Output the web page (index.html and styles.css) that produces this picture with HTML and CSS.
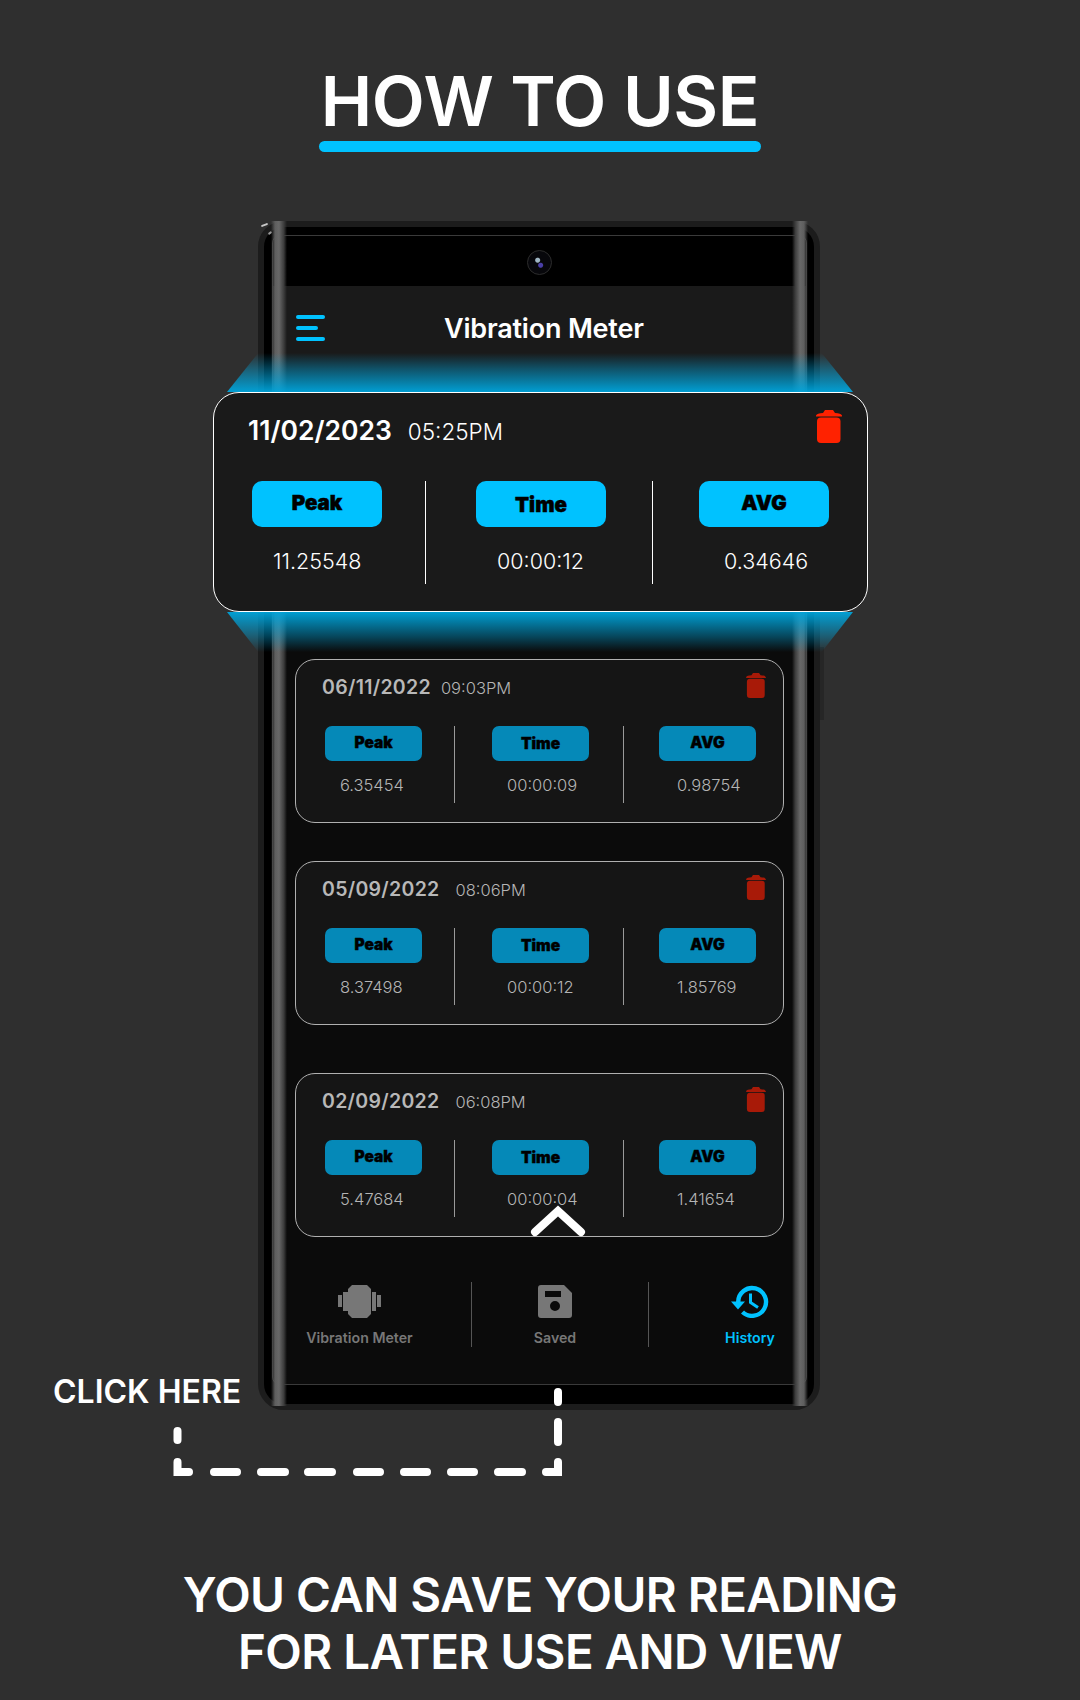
FILE: index.html
```html
<!DOCTYPE html>
<html lang="en">
<head>
    <meta charset="UTF-8">
    <meta name="viewport" content="width=device-width, initial-scale=1.0">
    <title>How to use - Vibration Meter</title>
    <link rel="stylesheet" href="styles.css">
</head>
<body>

    <svg width="0" height="0" class="defs">
        <symbol id="trash" viewBox="0 0 26 33">
            <path d="M0 5.5Q1 3.2 7 3L9 0H17L19 3Q25 3.2 26 5.5V6.5H0Z"/>
            <rect x="1" y="7.5" width="23.5" height="25.5" rx="4"/>
        </symbol>
    </svg>

    <main class="page">
        <header class="heading">
            <h1>HOW TO USE</h1>
        </header>

        <section class="phone">
            <span class="side-btn"></span>
            <span class="glint"></span>
            <span class="glint glint-inner"></span>
            <span class="strip strip-left"></span>
            <span class="strip strip-right"></span>

            <div class="screen">
                <div class="notch"><span class="camera"></span></div>

                <div class="appbar">
                    <span class="burger"><i></i><i class="short"></i><i></i></span>
                    <span class="appbar-title">Vibration Meter</span>
                </div>

                <div class="list">
                    <article class="rec">
                        <div class="rec-head">
                            <div class="when"><b>06/11/2022</b><span>09:03PM</span></div>
                            <svg class="trash"><use href="#trash"/></svg>
                        </div>
                        <div class="stats">
                            <div class="stat"><div class="pill">Peak</div><p>6.35454</p></div>
                            <span class="sep sep-a"></span>
                            <div class="stat"><div class="pill pill-low">Time</div><p>00:00:09</p></div>
                            <span class="sep sep-b"></span>
                            <div class="stat stat-last"><div class="pill">AVG</div><p>0.98754</p></div>
                        </div>
                    </article>

                    <article class="rec rec-wide">
                        <div class="rec-head">
                            <div class="when"><b>05/09/2022</b><span>08:06PM</span></div>
                            <svg class="trash"><use href="#trash"/></svg>
                        </div>
                        <div class="stats">
                            <div class="stat"><div class="pill">Peak</div><p>8.37498</p></div>
                            <span class="sep sep-a"></span>
                            <div class="stat"><div class="pill pill-low">Time</div><p>00:00:12</p></div>
                            <span class="sep sep-b"></span>
                            <div class="stat stat-last"><div class="pill">AVG</div><p>1.85769</p></div>
                        </div>
                    </article>

                    <article class="rec rec-wide rec-last">
                        <div class="rec-head">
                            <div class="when"><b>02/09/2022</b><span>06:08PM</span></div>
                            <svg class="trash"><use href="#trash"/></svg>
                        </div>
                        <div class="stats">
                            <div class="stat"><div class="pill">Peak</div><p>5.47684</p></div>
                            <span class="sep sep-a"></span>
                            <div class="stat"><div class="pill pill-low">Time</div><p>00:00:04</p></div>
                            <span class="sep sep-b"></span>
                            <div class="stat stat-last"><div class="pill">AVG</div><p>1.41654</p></div>
                        </div>
                    </article>
                </div>

                <nav class="tabs">
                    <div class="tab tab-vib">
                        <svg width="43" height="33" viewBox="0 0 43 33" fill="#777">
                            <path d="M14 0H29L33 4V29L29 33H14L10 29V4Z"/>
                            <rect x="5" y="7" width="5" height="19"/>
                            <rect x="34" y="7" width="4" height="19"/>
                            <rect y="10" width="4" height="12"/>
                            <rect x="39" y="10" width="4" height="12"/>
                        </svg>
                        <span>Vibration Meter</span>
                    </div>
                    <span class="tab-sep"></span>
                    <div class="tab tab-saved">
                        <svg width="34" height="33" viewBox="0 0 34 33" fill="#777">
                            <path fill-rule="evenodd" d="M3 0H26L34 8V30A3 3 0 0 1 31 33H3A3 3 0 0 1 0 30V3A3 3 0 0 1 3 0ZM7 6V12H23V6ZM17 16A5 5 0 1 0 17 26A5 5 0 1 0 17 16Z"/>
                        </svg>
                        <span>Saved</span>
                    </div>
                    <span class="tab-sep"></span>
                    <div class="tab tab-history">
                        <svg width="38" height="33" viewBox="0 0 38 33">
                            <path d="M7.2 17A13.9 13.9 0 1 1 11.5 27" fill="none" stroke="#00c2ff" stroke-width="4.4"/>
                            <path d="M0 16.5H14L7 24.5Z" fill="#00c2ff"/>
                            <path d="M19.5 8.5V17.5L27 22.5" fill="none" stroke="#00c2ff" stroke-width="3"/>
                        </svg>
                        <span>History</span>
                    </div>
                </nav>
            </div>

            <div class="glow glow-top"></div>
            <div class="glow glow-bottom"></div>

            <article class="rec rec-main">
                <div class="rec-head">
                    <div class="when"><b>11/02/2023</b><span>05:25PM</span></div>
                    <svg class="trash"><use href="#trash"/></svg>
                </div>
                <div class="stats">
                    <div class="stat"><div class="pill">Peak</div><p>11.25548</p></div>
                    <span class="sep sep-a"></span>
                    <div class="stat"><div class="pill pill-low">Time</div><p>00:00:12</p></div>
                    <span class="sep sep-b"></span>
                    <div class="stat stat-last"><div class="pill">AVG</div><p>0.34646</p></div>
                </div>
            </article>

            <svg class="chevron" width="56" height="34" viewBox="0 0 56 34">
                <path d="M5 28L28 7L51 28" fill="none" stroke="#fff" stroke-width="8" stroke-linecap="round"/>
            </svg>
        </section>

        <div class="click-here">CLICK HERE</div>
        <svg class="dash" width="400" height="100" viewBox="0 0 400 100" fill="none" stroke="#fff" stroke-width="8" stroke-linecap="round">
            <path d="M4.5 43V52"/>
            <path d="M4.5 74V84H16"/>
            <path d="M41 84H64M88 84H112M135 84H159M184 84H207M231 84H254M278 84H301M325 84H349"/>
            <path d="M373 84H385V74"/>
            <path d="M385 54V34M385 14V4"/>
        </svg>

        <footer class="caption">YOU CAN SAVE YOUR READING<br>FOR LATER USE AND VIEW</footer>
    </main>

</body>
</html>
```

FILE: styles.css
```css
body {
    font-family: Inter, "Liberation Sans", sans-serif;
    background-color: #2f2f2f;
    margin: 0;
}
.defs {
    position: absolute;
}
.page {
    position: relative;
    width: 1080px;
    height: 1700px;
    overflow: hidden;
    color: white;
}

/* title */
.heading {
    display: flex;
    justify-content: center;
    padding-top: 62px;
}
h1 {
    margin: 0;
    width: 442px;
    font-size: 69px;
    font-weight: 600;
    letter-spacing: -0.4px;
    line-height: 79px;
    text-align: center;
    white-space: nowrap;
}
h1::after {
    content: "";
    display: block;
    height: 11px;
    border-radius: 6px;
    background-color: #00c2ff;
}

/* phone body */
.phone {
    position: relative;
    box-sizing: border-box;
    width: 562px;
    height: 1189px;
    margin: 69px 0 0 258px;
    padding: 8px 7px 19px 8px;
    background-color: black;
    border: 6px solid #1c1c1c;
    border-radius: 26px;
}
.side-btn {
    position: absolute;
    right: -10px;
    top: 420px;
    width: 4px;
    height: 73px;
    background-color: #262626;
}
.glint {
    position: absolute;
    left: -3px;
    top: -3px;
    width: 7px;
    height: 2px;
    border-radius: 1px;
    background-color: #c8c8c8;
    transform: rotate(-20deg);
}
.glint-inner {
    left: 4px;
    top: 5px;
    width: 4px;
    background-color: #999;
    transform: rotate(-35deg);
}
.strip {
    position: absolute;
    top: -6px;
    bottom: -2px;
    width: 16px;
    z-index: 1;
}
.strip-left {
    left: 7px;
    background: linear-gradient(90deg, transparent, #5e5e5e 25%, #686868 50%, #3c3c3c 80%, transparent);
}
.strip-right {
    right: 6px;
    background: linear-gradient(90deg, transparent, #3c3c3c 20%, #686868 50%, #5e5e5e 75%, transparent);
}
.screen {
    box-sizing: border-box;
    display: flex;
    flex-direction: column;
    height: 100%;
    border: 1px solid #3a3a3a;
    border-radius: 8px;
    background-color: #0b0b0b;
    overflow: hidden;
}
.notch {
    flex: none;
    display: flex;
    justify-content: center;
    height: 50px;
    padding-top: 14px;
    box-sizing: border-box;
    background-color: black;
}
.camera {
    width: 25px;
    height: 25px;
    border-radius: 50%;
    border: 1px solid #2c2c2c;
    box-sizing: border-box;
    background: radial-gradient(circle at 55% 62%, #4a3fa8 0 2px, transparent 3px),
                radial-gradient(circle at 42% 40%, #9fb6c4 0 2px, transparent 3px),
                #07070b;
}

/* app bar */
.appbar {
    flex: none;
    display: flex;
    align-items: center;
    height: 104px;
    padding: 0 0 20px 23px;
    box-sizing: border-box;
    background-color: #1a1a1a;
}
.burger {
    display: flex;
    flex-direction: column;
    gap: 7px;
    width: 29px;
}
.burger i {
    display: block;
    height: 4px;
    border-radius: 2px;
    background-color: #00c2ff;
}
.burger i.short {
    width: 22px;
}
.appbar-title {
    margin-left: 119px;
    font-size: 27px;
    font-weight: 600;
    letter-spacing: -0.2px;
}

/* record cards */
.list {
    flex: 1;
    padding: 269px 22px 0 22px;
}
.rec {
    box-sizing: border-box;
    height: 164px;
    margin-bottom: 38px;
    border: 1px solid #b0b0b0;
    border-radius: 20px;
    background-color: #151515;
    color: #b4b4b4;
}
.rec-last {
    margin-top: 48px;
}
.rec-head {
    display: flex;
    justify-content: space-between;
    align-items: flex-start;
    box-sizing: border-box;
    height: 66px;
    padding: 13px 17px 0 26px;
}
.when {
    display: flex;
    align-items: baseline;
    padding-top: 2px;
}
.when b {
    font-size: 19.5px;
    font-weight: 600;
    letter-spacing: 0.3px;
    color: #b8b8b8;
}
.when span {
    margin-left: 10px;
    font-size: 16.5px;
    font-weight: 300;
}
.rec-wide .when span {
    margin-left: 16px;
}
.trash {
    width: 20px;
    height: 25px;
    fill: #a81a08;
}
.stats {
    display: flex;
    padding-left: 29px;
}
.stat {
    width: 97px;
}
.stat p {
    margin: 14px 0 0 15px;
    font-size: 16.5px;
    line-height: 20px;
    font-weight: 300;
}
.stat-last p {
    margin-left: 18px;
}
.pill {
    display: flex;
    align-items: center;
    justify-content: center;
    box-sizing: border-box;
    height: 35px;
    padding-bottom: 3px;
    border-radius: 7px;
    background-color: #0589b8;
    color: black;
    font-size: 15.5px;
    font-weight: 900;
    -webkit-text-stroke: 0.4px black;
}
.pill-low {
    padding-bottom: 0;
}
.sep {
    width: 1px;
    height: 77px;
    background-color: #9a9a9a;
}
.sep-a {
    margin: 0 37px 0 32px;
}
.sep-b {
    margin: 0 35px 0 34px;
}

/* highlighted record, sits over the phone edge */
.rec-main {
    position: absolute;
    left: -51px;
    top: 165px;
    z-index: 3;
    width: 655px;
    height: 220px;
    margin: 0;
    border-color: white;
    border-radius: 26px;
    background-color: #1a1a1a;
    color: white;
}
.rec-main .rec-head {
    height: 88px;
    padding: 17px 25px 0 34px;
}
.rec-main .when {
    padding-top: 4px;
}
.rec-main .when b {
    font-size: 26.5px;
    letter-spacing: 0;
    color: white;
}
.rec-main .when span {
    margin-left: 16px;
    font-size: 22.5px;
}
.rec-main .trash {
    width: 26px;
    height: 33px;
    fill: #ff2200;
}
.rec-main .stats {
    padding-left: 38px;
}
.rec-main .stat {
    width: 130px;
}
.rec-main .stat p {
    margin: 21px 0 0 21px;
    font-size: 21.5px;
    line-height: 26px;
}
.rec-main .stat-last p {
    margin-left: 25px;
}
.rec-main .pill {
    height: 46px;
    padding-bottom: 4px;
    border-radius: 10px;
    background-color: #00c2ff;
    font-size: 20.5px;
    -webkit-text-stroke: 0.5px black;
}
.rec-main .pill-low {
    padding-bottom: 0;
}
.rec-main .sep {
    height: 103px;
    background-color: white;
}
.rec-main .sep-a {
    margin: 0 50px 0 43px;
}
.rec-main .sep-b {
    margin: 0 46px 0 46px;
}
.glow {
    position: absolute;
    left: -37px;
    width: 626px;
    z-index: 2;
}
.glow-top {
    top: 126px;
    height: 39px;
    background: linear-gradient(180deg, rgba(0, 165, 220, 0), rgba(0, 165, 220, 0.4) 40%, rgba(0, 165, 220, 0.95));
    clip-path: polygon(5% 0, 95% 0, 100% 100%, 0 100%);
}
.glow-bottom {
    top: 385px;
    height: 40px;
    background: linear-gradient(180deg, rgba(0, 165, 220, 0.95), rgba(0, 165, 220, 0.4) 60%, rgba(0, 165, 220, 0));
    clip-path: polygon(0 0, 100% 0, 95% 100%, 5% 100%);
}
.chevron {
    position: absolute;
    left: 266px;
    top: 977px;
    z-index: 2;
}

/* bottom tabs */
.tabs {
    flex: none;
    display: flex;
    padding: 0 0 36px 33px;
}
.tab {
    display: flex;
    flex-direction: column;
    align-items: center;
    gap: 10px;
    font-size: 14.2px;
    font-weight: 600;
    color: #777;
    white-space: nowrap;
}
.tab span {
    line-height: 20px;
}
.tab-vib {
    width: 107px;
    margin-right: 58px;
}
.tab-saved {
    width: 62px;
    margin: 0 62px 0 52px;
}
.tab-history {
    width: 60px;
    margin-left: 71px;
    color: #00c2ff;
}
.tab-sep {
    width: 1px;
    height: 65px;
    margin-top: -3px;
    background-color: #555;
}

/* callout */
.click-here {
    position: absolute;
    left: 53px;
    top: 1372px;
    font-size: 32px;
    font-weight: 600;
    line-height: 39px;
}
.dash {
    position: absolute;
    left: 173px;
    top: 1388px;
    z-index: 4;
}
.caption {
    position: absolute;
    left: 0;
    right: 0;
    top: 1566px;
    font-size: 47.5px;
    font-weight: 600;
    letter-spacing: -0.55px;
    line-height: 57px;
    text-align: center;
}
```
